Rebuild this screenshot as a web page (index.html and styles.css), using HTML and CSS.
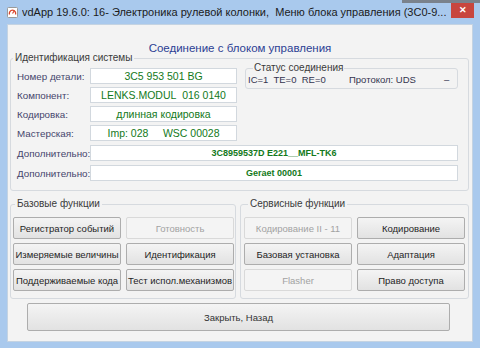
FILE: index.html
```html
<!DOCTYPE html>
<html lang="ru">

<head>
    <meta charset="UTF-8">
    <title>vdApp - Меню блока управления</title>
    <link rel="stylesheet" href="styles.css">
</head>

<body>
    <div class="desk-corner"></div>
    <div class="window">
        <!-- заголовок окна -->
        <div class="titlebar">
            <svg class="app-icon" width="11" height="11" viewBox="0 0 11 11">
                <rect x="0.5" y="0.5" width="10" height="10" rx="1" fill="#fff" stroke="#9a9a9a"/>
                <path d="M2.5 7.5 A3.2 3.2 0 1 1 8.5 7.5" fill="none" stroke="#d9442b" stroke-width="1.3"/>
                <path d="M5.5 6.5 L7.5 3.5" stroke="#d9442b" stroke-width="1.2"/>
            </svg>
            <span class="title">vdApp 19.6.0: 16- Электроника рулевой колонки,&nbsp; Меню блока управления (3C0-9...</span>
            <div class="close-x">&#x2715;</div>
        </div>

        <div class="client">
            <h1 class="heading">Соединение с блоком управления</h1>

            <!-- идентификация -->
            <fieldset class="group ident">
                <legend>Идентификация системы</legend>
                <div class="ident-top">
                    <div class="rows">
                        <div class="row">
                            <span class="label">Номер детали:</span>
                            <span class="field">3C5 953 501 BG</span>
                        </div>
                        <div class="row">
                            <span class="label">Компонент:</span>
                            <span class="field">LENKS.MODUL&nbsp; 016 0140</span>
                        </div>
                        <div class="row">
                            <span class="label">Кодировка:</span>
                            <span class="field">длинная кодировка</span>
                        </div>
                        <div class="row">
                            <span class="label">Мастерская:</span>
                            <span class="field">Imp: 028 &nbsp; &nbsp; WSC 00028</span>
                        </div>
                    </div>
                    <fieldset class="group status">
                        <legend>Статус соединения</legend>
                        <div class="status-line">
                            <span class="st-codes">IC=1&nbsp; TE=0&nbsp; RE=0</span>
                            <span class="st-proto">Протокол: UDS</span>
                            <span>&ndash;</span>
                        </div>
                    </fieldset>
                </div>
                <div class="row wide">
                    <span class="label">Дополнительно:</span>
                    <span class="field small">3C8959537D E221__MFL-TK6</span>
                </div>
                <div class="row wide">
                    <span class="label">Дополнительно:</span>
                    <span class="field small">Geraet 00001</span>
                </div>
            </fieldset>

            <!-- функции -->
            <div class="funcs">
                <fieldset class="group base">
                    <legend>Базовые функции</legend>
                    <div class="buttons">
                        <button class="btn">Регистратор событий</button>
                        <button class="btn" disabled>Готовность</button>
                        <button class="btn">Измеряемые величины</button>
                        <button class="btn">Идентификация</button>
                        <button class="btn">Поддерживаемые кода</button>
                        <button class="btn">Тест испол.механизмов</button>
                    </div>
                </fieldset>
                <fieldset class="group service">
                    <legend>Сервисные функции</legend>
                    <div class="buttons">
                        <button class="btn" disabled>Кодирование II - 11</button>
                        <button class="btn">Кодирование</button>
                        <button class="btn">Базовая установка</button>
                        <button class="btn">Адаптация</button>
                        <button class="btn" disabled>Flasher</button>
                        <button class="btn">Право доступа</button>
                    </div>
                </fieldset>
            </div>

            <button class="btn back">Закрыть, Назад</button>
        </div>
    </div>
</body>

</html>
```

FILE: styles.css
```css
* {
    box-sizing: border-box;
}

body {
    margin: 0;
    width: 480px;
    height: 348px;
    overflow: hidden;
    background: #a9c9ed;
    font-family: "Liberation Sans", Arial, sans-serif;
}

/* кусок рабочего стола над рамкой окна */
.desk-corner {
    position: absolute;
    top: 0;
    left: 402px;
    width: 78px;
    height: 3px;
    background: #7a828c;
}

.window {
    height: 348px;
    padding: 0 7px 6px;
    display: flex;
    flex-direction: column;
}

.titlebar {
    height: 24px;
    display: flex;
    align-items: center;
}

.app-icon {
    flex: none;
    margin-right: 4px;
}

.title {
    font-size: 11px;
    color: #1b1b1b;
    white-space: nowrap;
    overflow: hidden;
}

.close-x {
    position: relative;
    flex: none;
    align-self: flex-start;
    margin: 3px -1px 0 auto;
    width: 23px;
    height: 15px;
    background: #c8463e;
    color: #fff;
    font-size: 9px;
    font-weight: bold;
    line-height: 15px;
    text-align: center;
}

.client {
    flex: 1;
    background: #f3f3f3;
    border: 1px solid #c4d3e2;
    display: flex;
    flex-direction: column;
}

.heading {
    margin: 16px 0 0;
    font-size: 11.5px;
    font-weight: normal;
    line-height: 14px;
    text-align: center;
    color: #2c3e94;
}

.group {
    margin: 0;
    padding: 0;
    min-width: 0;
    border: 1px solid #d6dadf;
    border-radius: 3px;
}

.group legend {
    margin-left: 2px;
    padding: 0 2px;
    font-size: 10px;
    line-height: 10px;
    color: #3a3a3a;
}

.ident {
    margin: -2px 3px 0 2px;
    padding-bottom: 9px;
}

.ident-top {
    display: flex;
    align-items: flex-start;
}

.rows {
    margin-top: 5px;
}

.row {
    display: flex;
    align-items: center;
    height: 16px;
    padding-left: 6px;
}

.row + .row {
    margin-top: 3px;
}

.row.wide {
    margin-top: 4px;
}

.row.wide:first-of-type {
    margin-top: 3px;
}

.label {
    width: 73px;
    font-size: 9.8px;
    color: #45456c;
    white-space: nowrap;
}

.field {
    width: 147px;
    height: 16px;
    background: #fff;
    border: 1px solid #d2d8de;
    font-size: 10.5px;
    line-height: 14px;
    text-align: center;
    color: #13791a;
    white-space: nowrap;
}

.wide .field {
    width: 368px;
}

.field.small {
    font-size: 9px;
    font-weight: bold;
}

.status {
    flex: 1;
    margin: 0 10px 0 8px;
    padding: 1px 2px 2px;
}

.status legend {
    margin-left: 5px;
    padding: 0 1px;
}

.status-line {
    display: flex;
    font-size: 9.5px;
    line-height: 12px;
    color: #34344f;
    white-space: nowrap;
}

.st-codes {
    width: 101px;
}

.st-proto {
    width: 95px;
}

.funcs {
    display: flex;
    margin-top: 8px;
}

.base {
    width: 226px;
    margin-left: 2px;
    padding: 0 0 7px 2px;
}

.service {
    width: 229px;
    margin-left: 4px;
    padding: 0 0 7px 3px;
}

.service legend {
    margin-left: 4px;
}

.buttons {
    display: grid;
    grid-template-columns: 108px 108px;
    grid-auto-rows: 22px;
    gap: 4px 5px;
    margin-top: 8px;
}

.btn {
    padding: 0;
    font-family: "Liberation Sans", Arial, sans-serif;
    font-size: 9.5px;
    color: #1e1e1e;
    background: linear-gradient(#f4f4f4, #e2e2e2);
    border: 1px solid #adadad;
    border-radius: 2px;
    white-space: nowrap;
}

.btn:disabled {
    color: #a2a2a2;
    background: #f4f4f4;
    border-color: #d9d9d9;
}

.back {
    width: 423px;
    height: 28px;
    margin: 4px 0 0 19px;
    color: #333;
}
```
